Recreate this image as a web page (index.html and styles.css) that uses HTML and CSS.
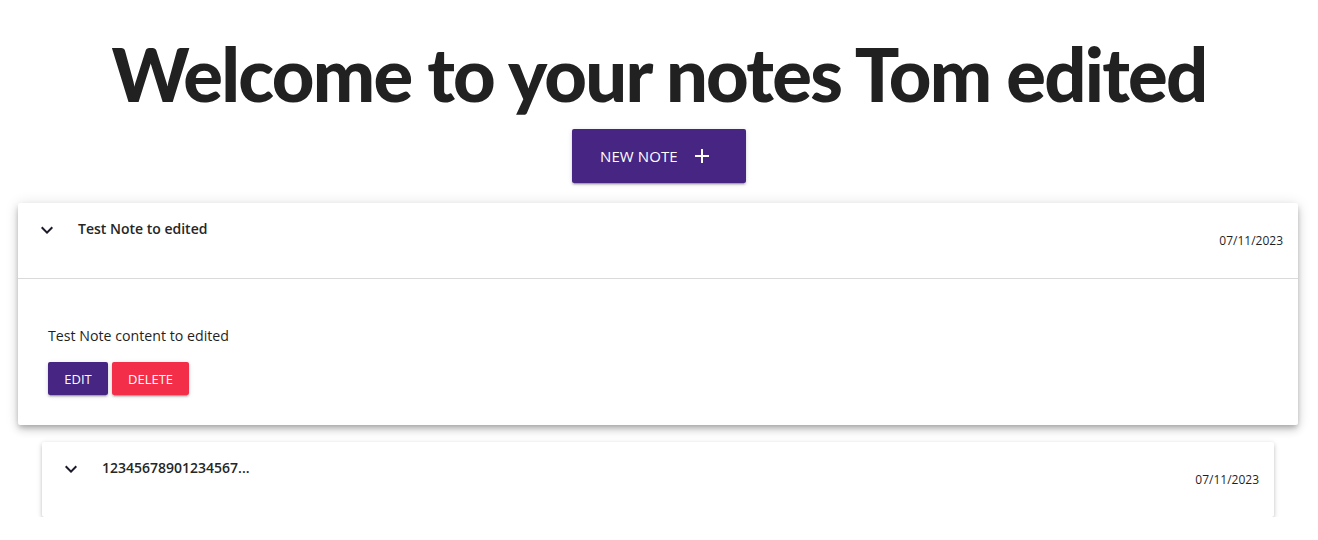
FILE: index.html
```html
<!DOCTYPE html>
<html lang="en">
<head>
<meta charset="utf-8">
<title>Notes</title>
<link rel="stylesheet" href="styles.css">
</head>
<body>
<main class="page">
  <h1 class="title">Welcome to your notes Tom edited</h1>
  <div class="actions">
    <button class="btn-new">
      <span>NEW NOTE</span>
      <svg class="plus" viewBox="0 0 24 24" width="24" height="24"><path d="M19 13h-6v6h-2v-6H5v-2h6V5h2v6h6v2z"/></svg>
    </button>
  </div>
  <section class="notes">
    <article class="note expanded">
      <header class="note-head">
        <svg class="chev" viewBox="0 0 24 24" width="24" height="24"><path d="M16.59 8.59 12 13.17 7.41 8.59 6 10l6 6 6-6z"/></svg>
        <div class="head-text">
          <div class="note-title">Test Note to edited</div>
          <div class="note-date">07/11/2023</div>
        </div>
      </header>
      <div class="note-body">
        <p class="note-content">Test Note content to edited</p>
        <div class="note-buttons">
          <button class="btn-sm edit">EDIT</button>
          <button class="btn-sm delete">DELETE</button>
        </div>
      </div>
    </article>
    <article class="note">
      <header class="note-head">
        <svg class="chev" viewBox="0 0 24 24" width="24" height="24"><path d="M16.59 8.59 12 13.17 7.41 8.59 6 10l6 6 6-6z"/></svg>
        <div class="head-text">
          <div class="note-title">12345678901234567...</div>
          <div class="note-date">07/11/2023</div>
        </div>
      </header>
    </article>
  </section>
</main>
</body>
</html>
```

FILE: styles.css
```css
* { box-sizing: border-box; }
html, body { margin: 0; padding: 0; background: #fff; }
body {
  font-family: "Open Sans", "Noto Sans", "Liberation Sans", sans-serif;
  color: #1f1f1f;
}
.page { padding-top: 29px; }
.title {
  margin: 0;
  text-align: center;
  white-space: nowrap;
  font-family: "Lato", "Open Sans", sans-serif;
  font-weight: 900;
  font-size: 74px;
  line-height: 90px;
  color: #212121;
  letter-spacing: -1.75px;
}
.actions {
  display: flex;
  justify-content: center;
  margin-top: 10px;
}
.btn-new {
  display: inline-flex;
  align-items: center;
  gap: 12px;
  height: 54px;
  width: 174px;
  padding: 0 0 0 28px;
  border: 0;
  border-radius: 2px;
  background: #462583;
  color: #fff;
  font-family: "Open Sans", sans-serif;
  font-size: 15px;
  letter-spacing: 0.1px;
  box-shadow: 0 3px 1px -2px rgba(0,0,0,.2), 0 2px 2px 0 rgba(0,0,0,.14), 0 1px 5px 0 rgba(0,0,0,.12);
  cursor: pointer;
}
.btn-new .plus { fill: #fff; }
.notes {
  padding: 0 44px 0 42px;
  margin-top: 20px;
}
.note {
  background: #fff;
  border-radius: 2px;
  box-shadow: 0 3px 3px -2px rgba(0,0,0,.25), 0 2px 4px 0 rgba(0,0,0,.14), 0 1px 6px 0 rgba(0,0,0,.10);
}
.note.expanded {
  margin: 0 -24px 17px -24px;
  box-shadow: 0 3px 5px -1px rgba(0,0,0,.2), 0 5px 8px 0 rgba(0,0,0,.14), 0 1px 14px 0 rgba(0,0,0,.12);
}
.note-head {
  display: flex;
  align-items: flex-start;
  padding: 15px 15px 0 17px;
  height: 76px;
}
.note.expanded .note-head { border-bottom: 1px solid #dadada; }
.note:not(.expanded) .note-head { height: 75px; }
.chev { fill: #1a1a2a; flex: none; margin-top: 0; }
.head-text {
  flex: 1;
  display: flex;
  flex-direction: column;
  margin-left: 19px;
}
.note-title {
  font-size: 14px;
  font-weight: 600;
  line-height: 22px;
  color: #262626;
}
.note-date {
  align-self: flex-end;
  font-size: 12px;
  line-height: 16px;
  margin-top: -7px;
}
.note-body { padding: 47px 30px 30px; }
.note-content {
  margin: 0;
  font-size: 14.2px;
  line-height: 20px;
}
.note-buttons {
  display: flex;
  gap: 4px;
  margin-top: 16px;
}
.btn-sm {
  height: 33px;
  border: 0;
  border-radius: 2px;
  color: #fff;
  font-family: "Open Sans", sans-serif;
  font-size: 13px;
  padding: 0;
  box-shadow: 0 3px 1px -2px rgba(0,0,0,.2), 0 2px 2px 0 rgba(0,0,0,.14), 0 1px 5px 0 rgba(0,0,0,.12);
}
.btn-sm.edit { background: #462583; width: 60px; }
.btn-sm.delete { background: #f22e48; width: 77px; }
```
